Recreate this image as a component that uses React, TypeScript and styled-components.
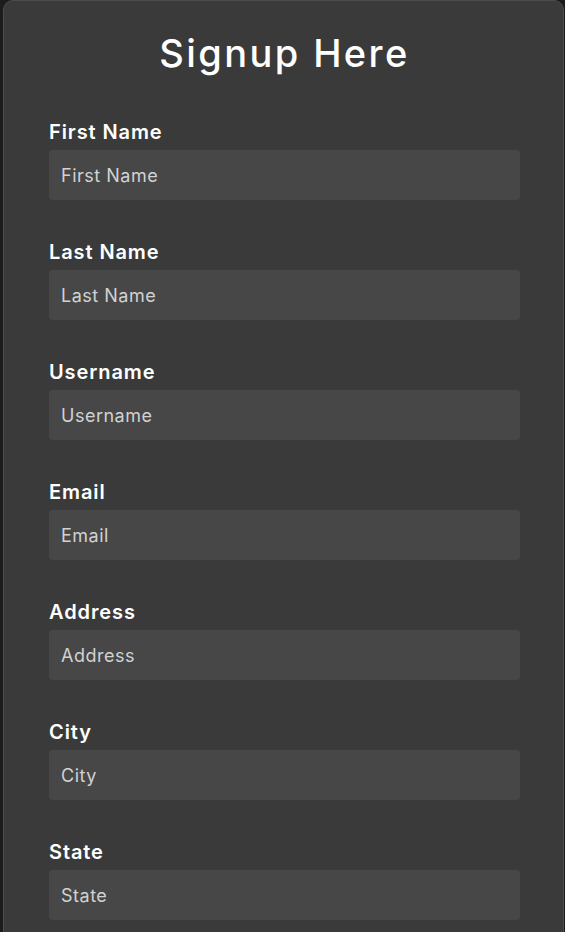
import { createGlobalStyle } from "styled-components";
import styled from "styled-components";

const GlobalStyle = createGlobalStyle`
    html, body {
        margin: 0;
        padding: 0;
        background: #1c1c1c;
        font-family: Inter, "Open Sans", sans-serif;
    }
    * {
        box-sizing: border-box;
    }
`;

const fields = ["First Name", "Last Name", "Username", "Email", "Address", "City", "State"];

export default function App() {
    return (
        <>
            <GlobalStyle />
            <Card>
                <Title>Signup Here</Title>
                <Form onSubmit={(e) => e.preventDefault()}>
                    {fields.map((f) => (
                        <Field key={f}>
                            <Label htmlFor={f}>{f}</Label>
                            <Input id={f} type={f === "Email" ? "email" : "text"} placeholder={f} />
                        </Field>
                    ))}
                </Form>
            </Card>
        </>
    );
}

const Card = styled.div`
    width: 561px;
    margin-left: 3px;
    min-height: 1100px;
    background: #3a3a3a;
    border: 1px solid #4c4c4c;
    border-radius: 10px;
    padding: 0 43px 40px 45px;
`;

const Title = styled.h1`
    margin: 0;
    padding: 25px 0 0;
    text-align: center;
    font-size: 38px;
    line-height: 54px;
    font-weight: 500;
    letter-spacing: 2.4px;
    color: #ffffff;
`;

const Form = styled.form`
    display: flex;
    flex-direction: column;
    gap: 39px;
    margin-top: 39px;
`;

const Field = styled.div`
    display: flex;
    flex-direction: column;
    gap: 5px;
`;

const Label = styled.label`
    font-size: 20px;
    line-height: 26px;
    font-weight: 600;
    letter-spacing: 0.9px;
    color: #ffffff;
`;

const Input = styled.input`
    width: 100%;
    height: 50px;
    border: none;
    border-radius: 4px;
    background: #474747;
    padding: 0 12px;
    font-family: inherit;
    font-size: 18px;
    letter-spacing: 0.5px;
    color: #ffffff;
    outline: none;

    &::placeholder {
        color: #d2d2d2;
    }
`;
